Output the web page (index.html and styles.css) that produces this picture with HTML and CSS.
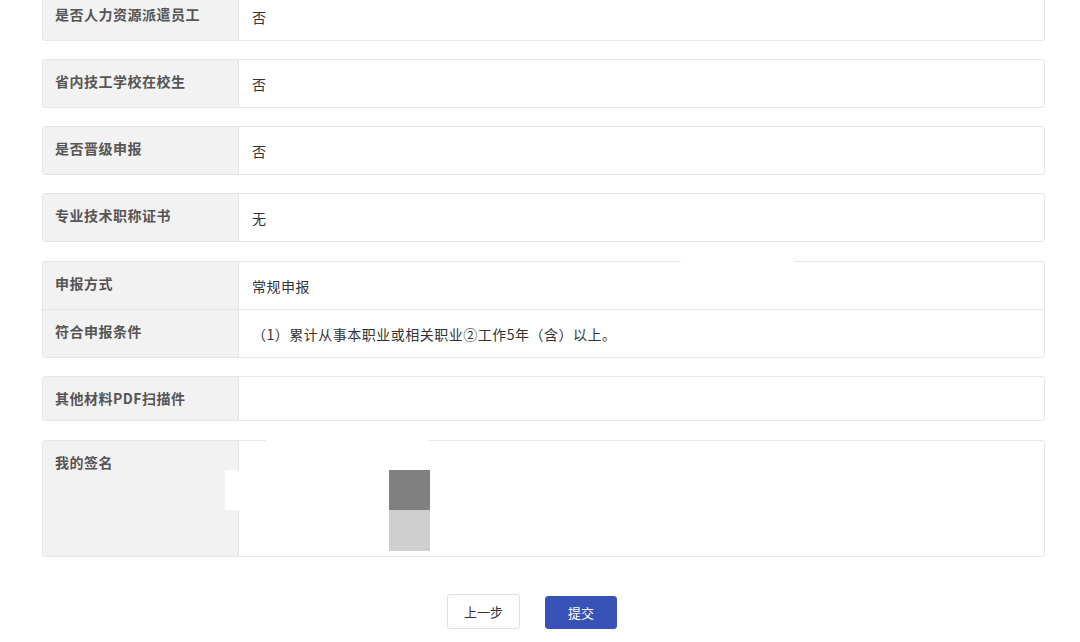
FILE: index.html
```html
<!DOCTYPE html>
<html lang="zh-CN">
<head>
<meta charset="utf-8">
<link rel="stylesheet" href="styles.css">
</head>
<body>
<div class="page">
  <div class="card"><div class="row"><div class="label">是否人力资源派遣员工</div><div class="value">否</div></div></div>
  <div class="card"><div class="row"><div class="label">省内技工学校在校生</div><div class="value">否</div></div></div>
  <div class="card"><div class="row"><div class="label">是否晋级申报</div><div class="value">否</div></div></div>
  <div class="card"><div class="row"><div class="label">专业技术职称证书</div><div class="value">无</div></div></div>
  <div class="card shift">
    <div class="row"><div class="label">申报方式</div><div class="value">常规申报</div></div>
    <div class="row"><div class="label">符合申报条件</div><div class="value">（1）累计从事本职业或相关职业②工作5年（含）以上。</div></div>
  </div>
  <div class="card"><div class="row short"><div class="label">其他材料PDF扫描件</div><div class="value"></div></div></div>
  <div class="card shift"><div class="row tall"><div class="label">我的签名</div><div class="value"></div></div></div>
  <div class="actions">
    <button class="btn btn-default">上一步</button>
    <button class="btn btn-primary">提交</button>
  </div>
  <div class="patch p1"></div>
  <div class="patch p2"></div>
  <div class="patch p3"></div>
  <div class="patch sq-dark"></div>
  <div class="patch sq-light"></div>
</div>
</body>
</html>
```
FILE: styles.css
```css
html, body { margin: 0; padding: 0; background: #fff; }
body {
  font-family: "Noto Sans CJK SC", "Noto Sans", sans-serif;
  overflow: hidden;
  height: 642px;
}
.page {
  position: relative;
  width: 1003px;
  margin: -8px 0 0 42px;
  display: flex;
  flex-direction: column;
  gap: 18px;
}
.card {
  border: 1px solid #e6e6e6;
  border-radius: 3px;
  overflow: hidden;
  background: #fff;
}
.card.shift { margin-top: 1px; }
.row {
  display: grid;
  grid-template-columns: 196px 1fr;
  height: 47px;
}
.row + .row { border-top: 1px solid #e6e6e6; height: 47px; }
.row.short { height: 43px; }
.row.tall { height: 115px; }
.label {
  background: #f2f2f2;
  border-right: 1px solid #e6e6e6;
  padding: 11px 0 0 12px;
  font-size: 14px;
  letter-spacing: 0.5px;
  line-height: 20px;
  font-weight: bold;
  color: #555;
}
.value {
  padding: 14px 0 0 13px;
  font-size: 14px;
  letter-spacing: 0.5px;
  line-height: 20px;
  color: #333;
}
.actions {
  display: flex;
  justify-content: center;
  align-items: flex-start;
  gap: 25px;
  margin-top: 19px;
  padding-right: 23px;
}
.btn {
  font-family: "Noto Sans CJK SC", sans-serif;
  font-size: 13px;
  border-radius: 3px;
  cursor: pointer;
  padding: 0;
}
.btn-default {
  width: 73px;
  height: 35px;
  background: #fff;
  border: 1px solid #e0e0e0;
  color: #333;
}
.btn-primary {
  width: 72px;
  height: 33px;
  background: #3853b7;
  border: 1px solid #3853b7;
  color: #fff;
  margin-top: 2px;
}
.patch { position: absolute; background: #fff; }
.p1 { left: 639px; top: 266px; width: 113px; height: 5px; }
.p2 { left: 224px; top: 446px; width: 163px; height: 5px; }
.p3 { left: 183px; top: 478px; width: 41px; height: 40px; }
.sq-dark { left: 347px; top: 478px; width: 41px; height: 40px; background: #808080; }
.sq-light { left: 347px; top: 518px; width: 41px; height: 41px; background: #cfcfcf; }
```
